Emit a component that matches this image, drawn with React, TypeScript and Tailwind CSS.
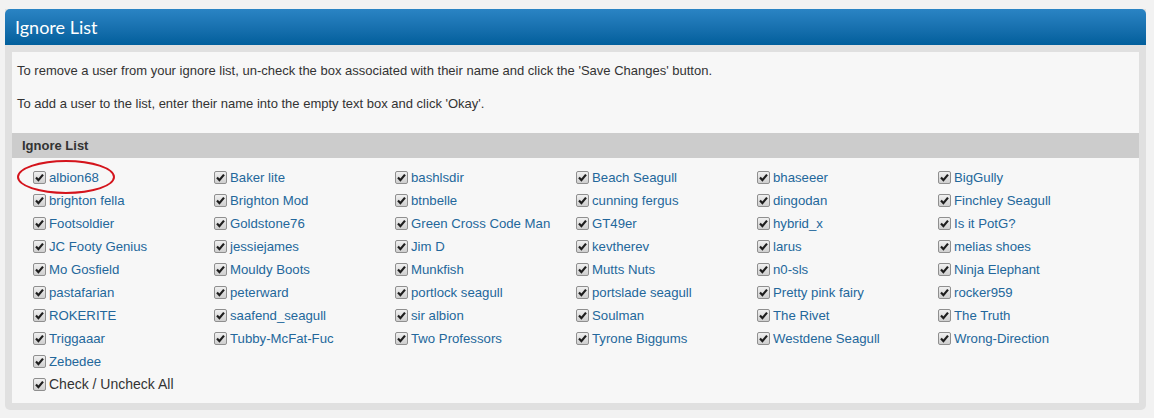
import React from 'react'

const NAMES = [
  'albion68', 'Baker lite', 'bashlsdir', 'Beach Seagull', 'bhaseeer', 'BigGully',
  'brighton fella', 'Brighton Mod', 'btnbelle', 'cunning fergus', 'dingodan', 'Finchley Seagull',
  'Footsoldier', 'Goldstone76', 'Green Cross Code Man', 'GT49er', 'hybrid_x', 'Is it PotG?',
  'JC Footy Genius', 'jessiejames', 'Jim D', 'kevtherev', 'larus', 'melias shoes',
  'Mo Gosfield', 'Mouldy Boots', 'Munkfish', 'Mutts Nuts', 'n0-sls', 'Ninja Elephant',
  'pastafarian', 'peterward', 'portlock seagull', 'portslade seagull', 'Pretty pink fairy', 'rocker959',
  'ROKERITE', 'saafend_seagull', 'sir albion', 'Soulman', 'The Rivet', 'The Truth',
  'Triggaaar', 'Tubby-McFat-Fuc', 'Two Professors', 'Tyrone Biggums', 'Westdene Seagull', 'Wrong-Direction',
  'Zebedee',
]

function Box() {
  return (
    <span className="inline-flex h-[13px] w-[13px] shrink-0 items-center justify-center rounded-[2px] border border-[#8f8f8f] bg-gradient-to-b from-[#f0f0f0] to-[#cfcfcf]">
      <svg width="9" height="9" viewBox="0 0 9 9">
        <path d="M1 4.6 L3.4 7.2 L8 1.6" fill="none" stroke="#1e1e1e" strokeWidth="2.2" />
      </svg>
    </span>
  )
}

function Item({ name, link = true }: { name: string; link?: boolean }) {
  return (
    <div className="flex h-[23px] w-[181px] items-center gap-[3px]">
      <Box />
      <span className={link ? 'text-[13.2px] text-[#23679b]' : 'text-[14px] text-[#333]'}>{name}</span>
    </div>
  )
}

export default function App() {
  return (
    <div className="min-h-[418px] bg-[#f2f2f2] pt-[9px] pl-[5px] pr-[8px] font-['Liberation_Sans',Arial,sans-serif] text-[13px] text-[#333]">
      <div className="w-[1141px] rounded-b-[5px] bg-[#e0e0e0]">
        <div className="flex h-[36px] items-center rounded-t-[5px] bg-gradient-to-b from-[#2a84c4] to-[#015f9c] pl-[10px] font-['Lato',sans-serif] text-[18px] text-white">
          Ignore List
        </div>
        <div className="px-[7px] pt-[7px] pb-[7px]">
          <div className="bg-[#f7f7f7]">
            <div className="px-[5px] pt-[10px]">
              <p className="mb-[15px] leading-[18px]">To remove a user from your ignore list, un-check the box associated with their name and click the 'Save Changes' button.</p>
              <p className="mb-[20px] leading-[18px]">To add a user to the list, enter their name into the empty text box and click 'Okay'.</p>
            </div>
            <div className="flex h-[25px] items-center bg-[#cccccc] pl-[10px] font-bold">Ignore List</div>
            <div className="relative flex flex-wrap pt-[8px] pb-[7px] pl-[21px]">
              {NAMES.map(n => <Item key={n} name={n} />)}
              <div className="w-full" />
              <Item name="Check / Uncheck All" link={false} />
              <div className="pointer-events-none absolute top-[2px] left-[5px] h-[34px] w-[98px] rounded-[50%] border-2 border-[#d4141c]" />
            </div>
          </div>
        </div>
      </div>
    </div>
  )
}
